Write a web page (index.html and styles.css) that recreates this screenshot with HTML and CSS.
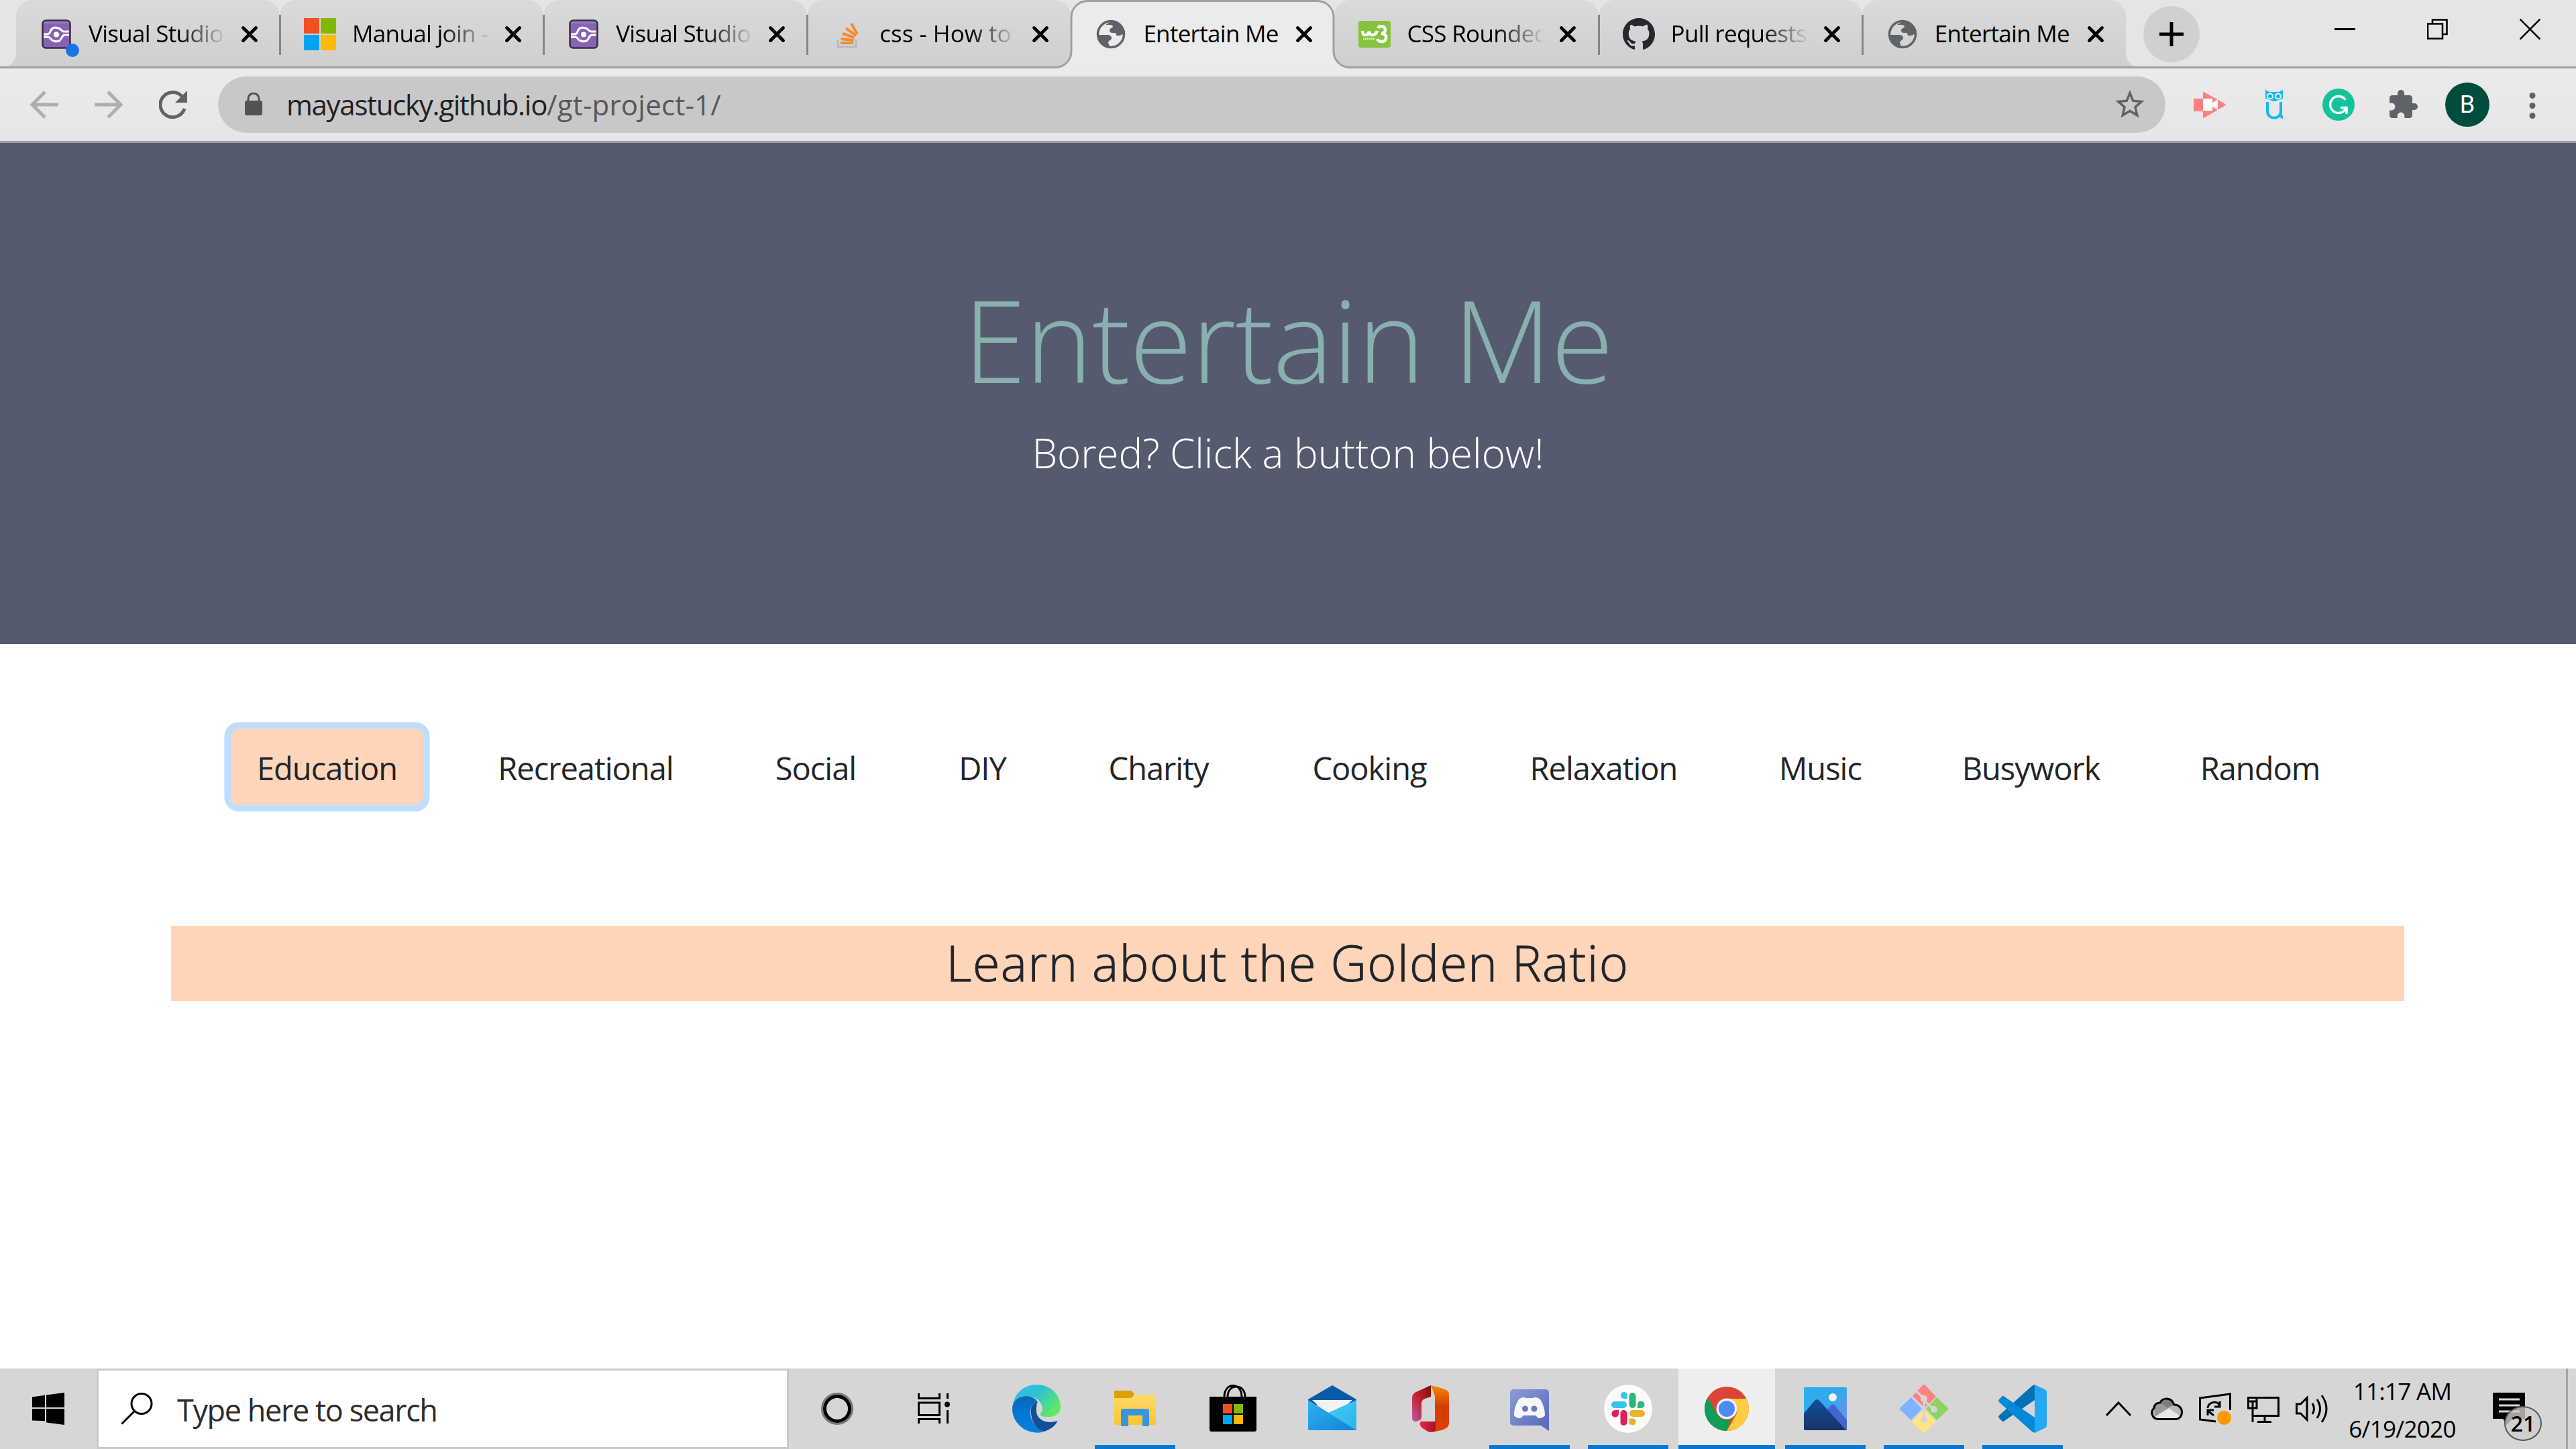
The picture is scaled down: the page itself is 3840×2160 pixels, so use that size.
FILE: index.html
```html
<!DOCTYPE html>
<html lang="en">
<head>
<meta charset="utf-8">
<title>Entertain Me</title>
<link rel="stylesheet" href="styles.css">
</head>
<body>
<svg class="defs" aria-hidden="true">
  <defs>
    <linearGradient id="vsG" x1="0" y1="0" x2="0" y2="1"><stop offset="0" stop-color="#a78be0"/><stop offset=".15" stop-color="#8661b4"/><stop offset="1" stop-color="#8a62b5"/></linearGradient>
    <linearGradient id="edgeA" x1="0" y1="0" x2="1" y2=".6"><stop offset="0" stop-color="#35b8f8"/><stop offset=".5" stop-color="#2cc3d2"/><stop offset="1" stop-color="#62e865"/></linearGradient>
    <linearGradient id="edgeB" x1="0" y1="0" x2="0" y2="1"><stop offset="0" stop-color="#0a66b5"/><stop offset=".5" stop-color="#0078d7"/><stop offset="1" stop-color="#0a80dc"/></linearGradient>
    <linearGradient id="foldG" x1="0" y1="0" x2="0" y2="1"><stop offset="0" stop-color="#ffd96b"/><stop offset="1" stop-color="#fbc52d"/></linearGradient>
    <linearGradient id="mailG" x1="0" y1="0" x2="1" y2="1"><stop offset="0" stop-color="#2fb1ef"/><stop offset="1" stop-color="#0f83d9"/></linearGradient>
    <linearGradient id="mailR" x1="0" y1="0" x2="1" y2="1"><stop offset="0" stop-color="#43cdf5"/><stop offset="1" stop-color="#2bb3ec"/></linearGradient>
    <linearGradient id="offA" x1="0" y1="0" x2="0" y2="1"><stop offset="0" stop-color="#f28c00"/><stop offset=".45" stop-color="#d83b01"/><stop offset="1" stop-color="#dc4400"/></linearGradient>
    <linearGradient id="offB" x1="1" y1="0" x2="0" y2="1"><stop offset="0" stop-color="#7c0a0a"/><stop offset=".5" stop-color="#c32126"/><stop offset="1" stop-color="#b85bb0"/></linearGradient>
    <linearGradient id="offC" x1="0" y1="0" x2="1" y2="0"><stop offset="0" stop-color="#e8284a"/><stop offset="1" stop-color="#a31626"/></linearGradient>
    <linearGradient id="disG" x1="0" y1="0" x2="1" y2="1"><stop offset="0" stop-color="#8c9bd6"/><stop offset="1" stop-color="#5368bd"/></linearGradient>
    <linearGradient id="phoG" x1="0" y1="0" x2="1" y2="1"><stop offset="0" stop-color="#28b0ec"/><stop offset=".5" stop-color="#35a8ea"/><stop offset="1" stop-color="#8d86e8"/></linearGradient>
    <linearGradient id="phoM" x1="0" y1="0" x2="0" y2="1"><stop offset="0" stop-color="#124f95"/><stop offset="1" stop-color="#18336b"/></linearGradient>
    <symbol id="vs" viewBox="0 0 48 48"><rect x="3.5" y="3.5" width="41" height="41" rx="5" fill="url(#vsG)" stroke="#34303a" stroke-width="2.5"/><g fill="none" stroke="#fff" stroke-width="3"><path d="M5 24h5c3 0 4-1 5-4 2-6 6-7 12-5 4 1 5 5 8 5h8"/><path d="M5 28h6c5 0 4 5 9 6 6 2 10 0 12-5 1-2 2-4 5-4h6"/></g><circle cx="24" cy="24.500" r="4" fill="#fff"/></symbol>
    <symbol id="globe" viewBox="0 0 48 48"><circle cx="24" cy="24" r="19.500" fill="none" stroke="#5f6368" stroke-width="3.500"/><path d="M25 4c12 0 20 9 20 20l-4 0c-1 1-3 2-5 2-3 1-5-1-5-4h-5c-3 0-4-2-4-4 0-3 4-3 5-5 0-2-2-3-5-3l-6 0zM4 25h14c5 0 7 2 7 5 0 3-4 3-5 6 0 2 2 3 2 8C11 43 4 36 4 25z" fill="#5f6368"/></symbol>
    <symbol id="x" viewBox="0 0 28 28"><path d="M4.500 4.500l19 19M23.500 4.500l-19 19" stroke="#000" stroke-width="4.800" stroke-linecap="round" fill="none"/></symbol>
    <symbol id="flare" viewBox="0 0 14 24"><path d="M14 0v24H0C9 20 14 10 14 0z" fill="#d0d0d0"/></symbol>
  </defs>
</svg>

<header class="tab-strip">
  <div class="tab first"><svg class="flare left"><use href="#flare"/></svg><svg class="fav"><use href="#vs"/></svg><span class="dot"></span><span class="label">Visual Studio</span><svg class="close"><use href="#x"/></svg></div>
  <div class="tab"><svg class="fav" viewBox="0 0 48 48"><path fill="#f25022" d="M0 0h23v23H0z"/><path fill="#7fba00" d="M25 0h23v23H25z"/><path fill="#00a4ef" d="M0 25h23v23H0z"/><path fill="#ffb900" d="M25 25h23v23H25z"/></svg><span class="label">Manual join -</span><svg class="close"><use href="#x"/></svg></div>
  <div class="tab"><svg class="fav"><use href="#vs"/></svg><span class="label">Visual Studio</span><svg class="close"><use href="#x"/></svg></div>
  <div class="tab no-sep"><svg class="fav" viewBox="0 0 48 48"><path d="M10 32v11h27V32" fill="none" stroke="#b4bac0" stroke-width="3"/><g stroke="#f58a2c" stroke-width="4"><path d="M14 37h19M14.500 31l19 2M17 23l17.500 6M22 15l15 11M30 8l9 16"/></g></svg><span class="label wide">css - How to</span><svg class="close"><use href="#x"/></svg></div>
  <div class="tab active no-sep"><svg class="shape" viewBox="0 0 441 105"><path d="M0 100.500h1A24 24 0 0 0 25 76.500V25.500A24 24 0 0 1 49 1.500H392A24 24 0 0 1 416 25.500V76.500A24 24 0 0 0 440 100.500h1V105H0z" fill="#ebebeb"/><path d="M0 100.500h1A24 24 0 0 0 25 76.500V25.500A24 24 0 0 1 49 1.500H392A24 24 0 0 1 416 25.500V76.500A24 24 0 0 0 440 100.500h1" fill="none" stroke="#a0a0a0" stroke-width="3"/></svg><svg class="fav"><use href="#globe"/></svg><span class="label whole">Entertain Me</span><svg class="close"><use href="#x"/></svg></div>
  <div class="tab"><svg class="fav" viewBox="0 0 48 48"><rect y="4" width="48" height="40" rx="3" fill="#86c440"/><path d="M6 19c0 8 8 8 10 1 1 7 9 7 12-1" fill="none" stroke="#fff" stroke-width="4.500"/><path d="M29 15c2-4 11-4 11 3 0 3-3 5-6 5 5 0 8 3 7 7-1 6-10 7-13 1" fill="none" stroke="#fff" stroke-width="4.500"/><path d="M7 31h18" stroke="#d6edc0" stroke-width="3" stroke-dasharray="2 1"/></svg><span class="label">CSS Rounded</span><svg class="close"><use href="#x"/></svg></div>
  <div class="tab"><svg class="fav" viewBox="0 0 16 16"><path fill="#24292e" d="M8 0C3.580 0 0 3.580 0 8c0 3.540 2.290 6.530 5.470 7.590.4.070.55-.17.55-.38 0-.19-.01-.82-.01-1.490-2.010.37-2.530-.49-2.690-.94-.09-.23-.48-.94-.82-1.130-.28-.15-.68-.52-.01-.53.63-.01 1.080.58 1.230.82.72 1.210 1.870.87 2.330.66.070-.52.28-.87.51-1.070-1.780-.2-3.640-.89-3.640-3.950 0-.87.31-1.590.82-2.150-.08-.2-.36-1.020.08-2.120 0 0 .67-.21 2.200.82.64-.18 1.320-.27 2-.27s1.360.090 2 .27c1.530-1.040 2.200-.82 2.200-.82.44 1.100.16 1.920.08 2.120.51.56.82 1.270.82 2.150 0 3.070-1.870 3.750-3.650 3.950.29.25.54.73.54 1.480 0 1.070-.01 1.930-.01 2.200 0 .21.15.46.55.38A8.010 8.010 0 0 0 16 8c0-4.420-3.580-8-8-8z"/></svg><span class="label">Pull requests</span><svg class="close"><use href="#x"/></svg></div>
  <div class="tab no-sep"><svg class="fav"><use href="#globe"/></svg><span class="label whole">Entertain Me</span><svg class="close"><use href="#x"/></svg><svg class="flare right"><use href="#flare"/></svg></div>
  <div class="new-tab"><svg viewBox="0 0 36 36"><path d="M18 0v36M0 18h36" stroke="#000" stroke-width="5"/></svg></div>
  <div class="win-buttons">
    <svg viewBox="0 0 31 31"><path d="M0 15.500h31" stroke="#000" stroke-width="3"/></svg>
    <svg viewBox="0 0 31 31"><path d="M1 7.500h22v22H1zM8 7V1.500h21.500V23H24" fill="none" stroke="#000" stroke-width="2.600"/></svg>
    <svg viewBox="0 0 31 31"><path d="M.5.500l30 30M30.500.500l-30 30" stroke="#000" stroke-width="2.600"/></svg>
  </div>
</header>

<div class="toolbar">
  <div class="nav-icons">
    <svg viewBox="0 0 42 42"><path d="M42 21H4M22 2L3 21l19 19" fill="none" stroke="#adaeb2" stroke-width="5"/></svg>
    <svg viewBox="0 0 42 42"><path d="M0 21h38M20 2l19 19-19 19" fill="none" stroke="#adaeb2" stroke-width="5"/></svg>
    <svg viewBox="0 0 42 42"><path d="M38 27A18.500 18.500 0 1 1 34 8.500" fill="none" stroke="#5f6368" stroke-width="5"/><path d="M42 0v18H24z" fill="#5f6368"/></svg>
  </div>
  <div class="omnibox">
    <svg class="lock" viewBox="0 0 26 34"><rect y="12" width="26" height="22" rx="3" fill="#505256"/><path d="M5 13V9a8 8 0 0 1 16 0v4" fill="none" stroke="#505256" stroke-width="3"/></svg>
    <span class="url"><span class="host">mayastucky.github.io</span><span class="path">/gt-project-1/</span></span>
    <svg class="star" viewBox="0 0 24 24"><path fill="#5f6368" d="M22 9.240l-7.190-.62L12 2 9.190 8.630 2 9.240l5.460 4.730L5.820 21 12 17.270 18.180 21l-1.630-7.030L22 9.240zM12 15.400l-3.760 2.270 1-4.280-3.320-2.880 4.380-.38L12 6.100l1.710 4.040 4.380.38-3.320 2.880 1 4.280L12 15.400z"/></svg>
  </div>
  <div class="extensions">
    <svg viewBox="0 0 48 48"><path fill="#ff7f80" stroke="#ff7f80" stroke-width="2" stroke-linejoin="round" d="M1 16h14V6l32 18-32 19V33H1z"/><path fill="#fff" d="M14 15h14v6l8-5v16l-8-5v6H14z"/></svg>
    <svg viewBox="0 0 48 48"><path d="M11 2l6 3h14l6-3v13l-12 4h-2l-12-4z" fill="#14b8f5"/><circle cx="18" cy="11.500" r="5" fill="#e9fbff"/><circle cx="30" cy="11.500" r="5" fill="#e9fbff"/><circle cx="18" cy="11.500" r="3" fill="#14b8f5"/><circle cx="30" cy="11.500" r="3" fill="#14b8f5"/><path d="M14 20v14c0 13 20 13 20 0V20v18q0 5 3 5" fill="none" stroke="#14b8f5" stroke-width="4"/></svg>
    <svg viewBox="0 0 48 48"><circle cx="24" cy="24" r="24" fill="#15c39a"/><path d="M34.500 17A12.500 12.500 0 1 0 24 36.500c5 0 9-3 11.500-8M27 28.500h9V38" fill="none" stroke="#fff" stroke-width="3.500"/></svg>
    <svg viewBox="0 0 24 24"><path fill="#5f6368" d="M20.500 11H19V7c0-1.100-.9-2-2-2h-4V3.500a2.500 2.500 0 0 0-5 0V5H4c-1.100 0-1.990.9-1.990 2v3.800H3.500c1.490 0 2.700 1.210 2.700 2.700s-1.210 2.700-2.700 2.700H2V20c0 1.100.9 2 2 2h3.800v-1.500c0-1.490 1.210-2.700 2.700-2.700s2.700 1.210 2.700 2.700V22H17c1.100 0 2-.9 2-2v-4h1.500a2.500 2.500 0 0 0 0-5z"/></svg>
    <span class="avatar">B</span>
    <svg viewBox="0 0 48 48"><g fill="#5f6368"><circle cx="24" cy="10.500" r="4.500"/><circle cx="24" cy="25.500" r="4.500"/><circle cx="24" cy="40.500" r="4.500"/></g></svg>
  </div>
</div>

<main class="page">
  <section class="hero">
    <h1>Entertain Me</h1>
    <p>Bored? Click a button below!</p>
  </section>
  <nav class="choices">
    <button class="choice selected">Education</button>
    <button class="choice">Recreational</button>
    <button class="choice">Social</button>
    <button class="choice">DIY</button>
    <button class="choice">Charity</button>
    <button class="choice">Cooking</button>
    <button class="choice">Relaxation</button>
    <button class="choice">Music</button>
    <button class="choice">Busywork</button>
    <button class="choice">Random</button>
  </nav>
  <h2 class="result">Learn about the Golden Ratio</h2>
</main>

<footer class="taskbar">
  <div class="start"><svg viewBox="0 0 48 48"><path d="M0 6.500l19-2.800V22H0zM21 3.400L48 0v22H21zM0 24h19v18.300L0 41.500zM21 24h27v24l-27-3.600z"/></svg></div>
  <div class="search"><svg viewBox="0 0 48 48"><circle cx="31" cy="16.500" r="15" fill="none" stroke="#000" stroke-width="3"/><path d="M20 28L1.500 46.500" stroke="#000" stroke-width="3"/></svg><span class="hint">Type here to search</span></div>
  <div class="app"><svg class="small" viewBox="0 0 48 48"><circle cx="24" cy="24" r="22.500" fill="none" stroke="#777" stroke-width="3"/><circle cx="24" cy="24" r="18.500" fill="none" stroke="#000" stroke-width="5"/></svg></div>
  <div class="app"><svg class="small" viewBox="0 0 48 48"><path d="M1.500 1v7.500h31V1M1.500 15h31v18.500h-31zM1.500 46v-6.500h31V46M44.500 1v8M44.500 26v20" fill="none" stroke="#000" stroke-width="3"/><circle cx="44" cy="17.500" r="4"/></svg></div>
  <div class="app edge"><svg viewBox="0 0 72 72"><path fill="url(#edgeA)" d="M1 28C5 10 20 0 36 0c22 0 36 16 36 33 0 11-10 16-21 15-6 0-10-2-9-5 3-3 3-5 3-7 0-8-7-18-23-19-10 0-17 5-21 11z"/><path fill="url(#edgeB)" d="M0 36c0-14 12-19 22-19 10 1 15 6 16 10-8 1-11 7-11 15 0 14 11 26 23 27-10 5-28 3-38-7C4 55 0 46 0 36z"/><path fill="#124f94" d="M37 27c-7 1-10 7-9 15 0 16 12 28 22 27 8-3 16-9 17-15-11 4-25 2-30-9-2-7-1-12 0-18z"/></svg></div>
  <div class="app open"><svg viewBox="0 0 72 72"><path fill="#dda000" d="M5 9h26l4 5-5 8H5z"/><path fill="url(#foldG)" d="M5 20h26l5-5h29a2 2 0 0 1 2 2v41a2 2 0 0 1-2 2H7a2 2 0 0 1-2-2z"/><path fill="#3a94dc" d="M15 62V40a4 4 0 0 1 4-4h34a4 4 0 0 1 4 4v22H47V46H26v16z"/></svg></div>
  <div class="app"><svg viewBox="0 0 72 72"><path d="M0 18h70v49a3 3 0 0 1-3 3H3a3 3 0 0 1-3-3z"/><path d="M22 18C22-4 48-4 48 18M27 18C27-2 53-2 53 18" fill="none" stroke="#000" stroke-width="3"/><path fill="#f25022" d="M20 29h14v14H20z"/><path fill="#7fba00" d="M36 29h14v14H36z"/><path fill="#00a4ef" d="M20 45h14v14H20z"/><path fill="#ffb900" d="M36 45h14v14H36z"/></svg></div>
  <div class="app"><svg viewBox="0 0 72 72"><path fill="#0a5aa8" d="M0 22L36 1l36 21v8H0z"/><path fill="#f2f2f2" d="M6 23h60L36 50z"/><path fill="url(#mailR)" d="M72 23v45L30 42z"/><path fill="url(#mailG)" d="M0 23l72 45H2a2 2 0 0 1-2-2z"/></svg></div>
  <div class="app"><svg viewBox="0 0 72 72"><path fill="url(#offB)" d="M36 1v17l-9 3c-4 2-5 4-5 8v19c0 4-3 5-5 6-5 3-9-1-9-3V20c0-5 2-7 6-9z"/><path fill="url(#offA)" d="M36 1l15 4c9 3 12 4 12 10v42c0 6-3 8-11 11l-15 3 5-8V17z"/><path fill="url(#offC)" d="M21 55h22v14l-6 2c-3 0-6-1-10-4-8-4-9-10-6-12z"/></svg></div>
  <div class="app open"><svg viewBox="0 0 72 72"><path fill="url(#disG)" d="M7 12a5 5 0 0 1 5-5h48a5 5 0 0 1 5 5v57L53 61H12a5 5 0 0 1-5-5z"/><path fill="#f6f6f8" d="M20 22c6-4 9-3 10-2h12c1-1 4-2 10 2 5 8 7 16 7 24-3 4-7 4-10 4l-4-4H27l-4 4c-3 0-7 0-10-4 0-8 2-16 7-24z"/><circle cx="29.500" cy="36" r="4.500" fill="#6478c4"/><circle cx="43" cy="36" r="4.500" fill="#6478c4"/></svg></div>
  <div class="app open"><svg viewBox="0 0 72 72"><circle cx="36" cy="36" r="36" fill="#fbfbfb"/><g stroke-width="10" stroke-linecap="round"><path d="M16 30h13" stroke="#36c5f0"/><path d="M42.500 17v13" stroke="#2eb67d"/><path d="M43 43h13" stroke="#ecb22e"/><path d="M29.500 43v13" stroke="#e01e5a"/></g><path fill="#36c5f0" d="M35 21h-5.500a5 5 0 1 1 5.500-5z"/><path fill="#2eb67d" d="M50 35v-5.500a5.300 5.300 0 1 1 5.500 5.500z"/><path fill="#ecb22e" d="M37.500 50.500H43a5 5 0 1 1-5.500 5.500z"/><path fill="#e01e5a" d="M22 38v5.500a5.300 5.300 0 1 1-5.500-5.500z"/></svg></div>
  <div class="app open current"><svg viewBox="0 0 72 72"><circle cx="36" cy="36" r="33" fill="#db4437"/><path fill="#0f9d58" d="M7.400 19.500L21.700 44.200A16.500 16.500 0 0 0 42 51.400L36 69A33 33 0 0 1 7.400 19.500z"/><path fill="#ffcd40" d="M36 21h29.300A33 33 0 0 1 36 69l14.300-24.800A16.500 16.500 0 0 0 36 21z"/><circle cx="36" cy="36" r="15.500" fill="#f1f1f1"/><circle cx="36" cy="36" r="12" fill="#4c8bf5"/></svg></div>
  <div class="app open"><svg viewBox="0 0 72 72"><rect x="4" y="4" width="64" height="64" rx="2" fill="url(#phoG)"/><circle cx="47" cy="19" r="6" fill="#f3f3f3"/><path fill="#4167cf" d="M30 50l13-18c3-4 6-3 9 1l16 20v15H36z"/><path fill="url(#phoM)" d="M4 43l16-19c3-3 6-2 8 1l39 43H6a2 2 0 0 1-2-2z"/></svg></div>
  <div class="app open"><svg viewBox="0 0 72 72"><path fill="#80b3ff" d="M17 19L33 36 17 53 1 38q-2-2 0-4z"/><path fill="#ff8080" d="M34 1q2-2 4 0l16 17-17 17L19 17z"/><path fill="#8dd35f" d="M55 19l16 15q2 2 0 4L55 53 39 36z"/><path fill="#ffe680" d="M36 38l18 16-16 17q-2 2-4 0L18 55z"/><path d="M23 8l13 13v33M36 24l15 13" fill="none" stroke="#d5d5d5" stroke-width="3.500"/><g fill="#d5d5d5"><circle cx="36" cy="21" r="5"/><circle cx="51" cy="37" r="5"/><circle cx="36" cy="52" r="5"/></g></svg></div>
  <div class="app open"><svg viewBox="0 0 72 72"><path fill="#0072b5" d="M54 0v23L9 54c-2 2-3 1-4 0l-4-4c-1-2-1-3 0-4L50 2z"/><path fill="#008ad8" d="M54 72V49L9 18c-2-2-3-1-4 0l-4 4c-1 2-1 3 0 4l49 44z"/><path fill="#25a8f3" d="M54 0l15 7c2 1 3 2 3 4v50c0 2-1 3-3 4l-15 7z"/></svg></div>
  <div class="tray">
    <svg viewBox="0 0 48 48"><path d="M6 34l18-19 18 19" fill="none" stroke="#000" stroke-width="3"/></svg>
    <svg viewBox="0 0 48 48"><path d="M11 39A9.500 9.500 0 0 1 5 23c0-5 4-8 9-8 3-8 17-9 21 3 6 0 12 4 12 11 0 6-4 10-9 10z" fill="#b9b9b9"/><path d="M14 15c3-8 17-9 21 3L25 23z" fill="#7b7b7b"/><path d="M5 24c0-6 5-9 9-9l13 9L7 36z" fill="#9a9a9a"/><path d="M6 36l21-13 17 12-6 4H11z" fill="#e8e8e8"/><path d="M11 39.500A9.500 9.500 0 0 1 5 23c0-5 4-8 9-8 3-8 17-9 21 3 6 0 11.500 4 11.500 11 0 6-4 10.500-9 10.500z" fill="none" stroke="#000" stroke-width="3"/></svg>
    <svg viewBox="0 0 48 48"><path d="M25 43L1.500 40V8L46.500 2v24M13 23c0-9 16-13 18-2M31 13v8h-8M13 34v-8h9M13 27l9 7" fill="none" stroke="#000" stroke-width="3"/><circle cx="37.500" cy="37.500" r="10.500" fill="#ff9800"/></svg>
    <svg viewBox="0 0 48 48"><path d="M14 7.500h32.500v27H9M1.500 7.500H14V23H1.500zM8 14v30M26 35v8M15 43.500h21M1.500 13H14" fill="none" stroke="#000" stroke-width="3"/></svg>
    <svg viewBox="0 0 48 48"><path d="M1.500 17h6L17 7.500v33L7.500 31h-6zM25 16q5 8 0 16M32 10q9 14 0 28M39 4q14 20 0 40" fill="none" stroke="#000" stroke-width="3"/></svg>
  </div>
  <div class="clock"><span>11:17 AM</span><span>6/19/2020</span></div>
  <div class="notify"><svg viewBox="0 0 74 72"><path d="M0 0h48v39H29l-8 9-6-9H0z"/><path d="M9 10h31M9 19h31M9 28h31" stroke="#d6d6d6" stroke-width="3"/></svg><span class="count">21</span></div>
  <div class="peek"></div>
</footer>
</body>
</html>
```
FILE: styles.css
```css
* { box-sizing: border-box; }

body {
  margin: 0;
  width: 3840px;
  height: 2160px;
  overflow: hidden;
  display: flex;
  flex-direction: column;
  background: #fff;
  font-family: "Open Sans", "Noto Sans", sans-serif;
  color: #000;
}

svg { display: block; flex: none; }
.defs { position: absolute; width: 0; height: 0; }

/* Tab strip */
.tab-strip {
  position: relative;
  flex: none;
  display: flex;
  height: 102px;
  padding-left: 24px;
  background: #e5e5e5;
  border-bottom: 3px solid #a0a0a0;
}
.tab {
  position: relative;
  flex: none;
  width: 393.1px;
  height: 99px;
  padding: 0 30px 0 36px;
  display: flex;
  align-items: center;
  background: linear-gradient(#dadada, #cfcfcf);
  border-radius: 24px 24px 0 0;
}
.tab::after {
  content: "";
  position: absolute;
  right: -2px;
  top: 22px;
  width: 3px;
  height: 60px;
  background: #868686;
  z-index: 1;
}
.tab.no-sep::after { display: none; }
.flare { position: absolute; bottom: 0; width: 14px; height: 24px; }
.flare.left { left: -13px; }
.flare.right { right: -13px; transform: scaleX(-1); }
.fav { position: relative; width: 48px; height: 48px; margin-top: 3px; }
.dot {
  position: absolute;
  left: 74px;
  top: 65px;
  width: 20px;
  height: 20px;
  border-radius: 50%;
  background: #1a73e8;
}
.label {
  position: relative;
  flex: none;
  width: 206px;
  margin-left: 24px;
  overflow: hidden;
  white-space: nowrap;
  font-size: 35px;
  line-height: 48px;
  letter-spacing: -0.7px;
  mask-image: linear-gradient(90deg, #000 65%, transparent);
}
.label.wide { letter-spacing: 0; }
.label.whole { mask-image: none; }
.close { position: relative; width: 28px; height: 28px; margin-left: 20px; margin-top: 3px; }
/* The active tab is painted over its neighbours and the strip's bottom line */
.active { background: none; z-index: 2; }
.shape { position: absolute; left: -24px; top: 0; width: 441px; height: 105px; }
.new-tab {
  flex: none;
  width: 84px;
  height: 84px;
  margin: 9px 0 0 26px;
  border-radius: 50%;
  background: #d0d0d0;
  display: grid;
  place-items: center;
}
.new-tab svg { width: 36px; height: 36px; }
.win-buttons {
  margin-left: auto;
  display: flex;
  gap: 107px;
  padding: 28px 53px 0 0;
}
.win-buttons svg { width: 31px; height: 31px; }

/* Toolbar */
.toolbar {
  flex: none;
  display: flex;
  align-items: center;
  height: 111px;
  background: linear-gradient(#ebebeb, #e6e6e6);
  border-bottom: 3px solid #a0a0a0;
}
.nav-icons { flex: none; width: 325px; padding-left: 45px; display: flex; gap: 54px; }
.nav-icons svg { width: 42px; height: 42px; }
.omnibox {
  flex: none;
  width: 2903px;
  height: 84px;
  padding: 0 27px 0 40px;
  border-radius: 42px;
  background: #c8c8c8;
  display: flex;
  align-items: center;
}
.lock { width: 26px; height: 34px; margin-top: -3px; }
.url { margin-left: 36px; font-size: 42px; line-height: 60px; white-space: nowrap; }
.host { color: #202124; letter-spacing: -1.3px; }
.path { color: #55575b; letter-spacing: 0.2px; }
.star { width: 52px; height: 52px; margin-left: auto; }
.extensions { flex: none; display: flex; align-items: center; margin-left: 42px; }
.extensions svg { width: 48px; height: 48px; margin-right: 48px; }
.extensions svg:last-child { margin-right: 0; }
.avatar {
  width: 66px;
  height: 66px;
  margin: 0 40px 0 -9px;
  border-radius: 50%;
  background: #004d40;
  color: #fff;
  font: 36px/66px Roboto, sans-serif;
  text-align: center;
}

/* Page */
.page { flex: 1; background: #fff; }
.hero {
  height: 747px;
  padding-top: 176px;
  background: #555a6e;
  text-align: center;
}
.hero h1 {
  margin: 0;
  font-size: 170px;
  line-height: 232px;
  font-weight: 300;
  letter-spacing: -1px;
  color: #88b0ae;
}
.hero p {
  margin: 9px 0 0;
  font-size: 60px;
  line-height: 90px;
  font-weight: 300;
  color: #fff;
}
.choices {
  display: grid;
  grid-template-columns: 287px 340px 202px 151px 230px 255px 299px 203px 281px 258px;
  column-gap: 72px;
  padding: 126px 0 0 344px;
}
.choice {
  height: 114px;
  padding: 3px 0 0;
  border: 0;
  border-radius: 12px;
  background: none;
  color: #212529;
  font: 47px/72px "Open Sans", "Noto Sans", sans-serif;
  letter-spacing: -1px;
  white-space: nowrap;
}
.choice.selected { background: #ffd5ba; box-shadow: 0 0 0 9.6px #bfdeff; }
.result {
  height: 112px;
  margin: 180px 256px 0 255px;
  background: #ffd5ba;
  color: #212529;
  font: 300 74px/110px "Open Sans", sans-serif;
  letter-spacing: 1.3px;
  -webkit-text-stroke: 0.9px #212529;
  text-align: center;
}

/* Taskbar */
.taskbar {
  flex: none;
  display: flex;
  height: 120px;
  background: #d6d6d6;
}
.start { flex: none; width: 144px; display: grid; place-items: center; }
.start svg { width: 48px; height: 48px; }
.search {
  flex: none;
  width: 1032px;
  display: flex;
  align-items: center;
  padding-left: 33px;
  border: 3px solid #cacaca;
  background: #fff;
  color: #2b2b2b;
  font-size: 45px;
  line-height: 60px;
  letter-spacing: -1.4px;
}
.search svg { width: 48px; height: 48px; margin-right: 36px; }
.hint { padding-top: 4px; }
.app {
  position: relative;
  flex: none;
  width: 144px;
  display: grid;
  place-items: center;
  margin-right: 3px;
}
.app:has(.small) { margin-right: 0; }
.edge { margin-left: 9px; }
.app svg { width: 72px; height: 72px; }
.app svg.small { width: 48px; height: 48px; }
.app.open::after {
  content: "";
  position: absolute;
  left: 12px;
  right: 12px;
  bottom: 0;
  height: 6px;
  background: #0078d7;
}
.app.current { background: #eee; }
.app.current::after { left: 0; right: 0; }
.tray { display: flex; align-items: center; gap: 24px; margin-left: 44px; }
.tray svg { width: 48px; height: 48px; }
.clock {
  width: 200px;
  margin-left: 11px;
  padding-top: 6px;
  display: flex;
  flex-direction: column;
  align-items: center;
  font-size: 35px;
  line-height: 56px;
  letter-spacing: -0.7px;
}
.notify { position: relative; width: 74px; margin: 36px 0 0 35px; }
.notify svg { width: 74px; height: 72px; }
.count {
  position: absolute;
  left: 17px;
  top: 20px;
  width: 56px;
  height: 52px;
  border: 2px solid #555;
  border-radius: 50%;
  background: rgba(205, 205, 205, 0.8);
  font: 600 32px/48px "Open Sans", sans-serif;
  text-align: center;
}
.peek { width: 15px; margin-left: auto; border-left: 3px solid #a5a5a5; }
```
